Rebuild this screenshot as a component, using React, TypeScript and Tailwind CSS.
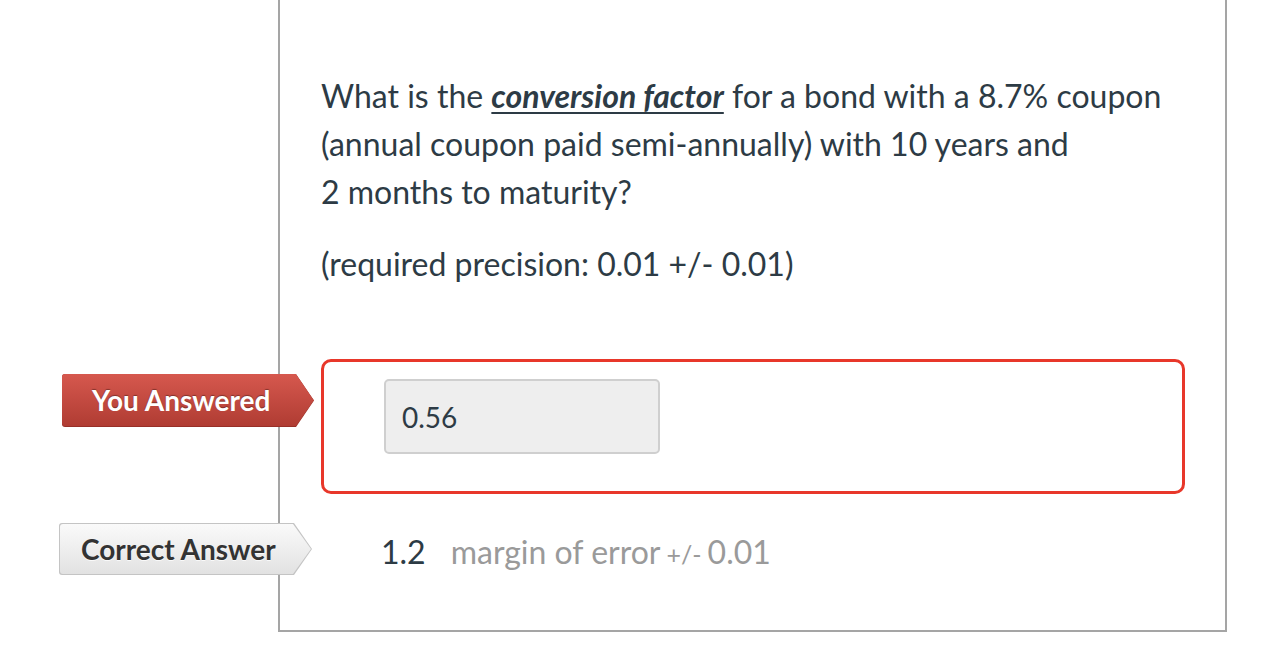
import React from "react";

const tagClip =
  "[clip-path:polygon(0_0,calc(100%-18px)_0,100%_50%,calc(100%-18px)_100%,0_100%)]";

export default function App() {
  return (
    <div className="w-[1278px] h-[670px] bg-white overflow-hidden font-['Lato',sans-serif] text-[#2d3b45]">
      <div className="ml-[278px] w-[949px] h-[632px] border-x-2 border-b-2 border-[#a5a5a5] pl-[41px] pt-[72px]">
        <p className="text-[32px] leading-[48px] w-[870px]">
          What is the{" "}
          <span className="font-bold italic underline underline-offset-[4px] decoration-2">
            conversion factor
          </span>{" "}
          for a bond with a 8.7% coupon
          <br />
          (annual coupon paid semi-annually) with 10 years and
          <br />2 months to maturity?
        </p>
        <p className="text-[32px] leading-[48px] mt-[24px]">(required precision: 0.01 +/- 0.01)</p>

        {/* You Answered row */}
        <div className="flex items-start mt-[71px] ml-[-259px]">
          <div className={`mt-[15px] w-[252px] h-[53px] ${tagClip} bg-[#982f27] rounded-l-[3px]`}>
            <div
              className={`w-[252px] h-[52px] ${tagClip} bg-gradient-to-b from-[#d6584e] to-[#b03c33] rounded-l-[3px] flex items-center pl-[30px]`}
            >
              <span className="text-white font-bold text-[28px] [text-shadow:0_-1px_1px_rgba(0,0,0,0.35)]">
                You Answered
              </span>
            </div>
          </div>
          <div className="ml-[7px] w-[864px] h-[135px] border-[3px] border-[#e8372a] rounded-[10px] pl-[60px] pt-[17px]">
            <div className="w-[276px] h-[75px] bg-[#eeeeee] border-2 border-[#cfcfcf] rounded-[5px] flex items-center pl-[16px] text-[28px] text-[#2d3b45]">
              0.56
            </div>
          </div>
        </div>

        {/* Correct Answer row */}
        <div className="flex items-center mt-[28px] ml-[-262px]">
          <div className={`w-[253px] h-[52px] ${tagClip} bg-[#c4c4c4] rounded-l-[3px] flex items-center`}>
            <div
              className={`ml-[1px] w-[251px] h-[50px] ${tagClip} bg-gradient-to-b from-[#fafafa] to-[#e2e2e2] rounded-l-[3px] flex items-center pl-[21px]`}
            >
              <span className="text-[#333333] font-bold text-[28px] [text-shadow:0_1px_0_rgba(255,255,255,0.8)]">
                Correct Answer
              </span>
            </div>
          </div>
          <div className="ml-[69px] mt-[6px] flex items-baseline">
            <span className="text-[32px] text-[#2d3b45]">1.2</span>
            <span className="ml-[25px] text-[32px] text-[#9a9a9a]">margin of error</span>
            <span className="ml-[6px] text-[25px] text-[#9a9a9a]">+/-</span>
            <span className="ml-[6px] text-[32px] text-[#9a9a9a]">0.01</span>
          </div>
        </div>
      </div>
    </div>
  );
}
